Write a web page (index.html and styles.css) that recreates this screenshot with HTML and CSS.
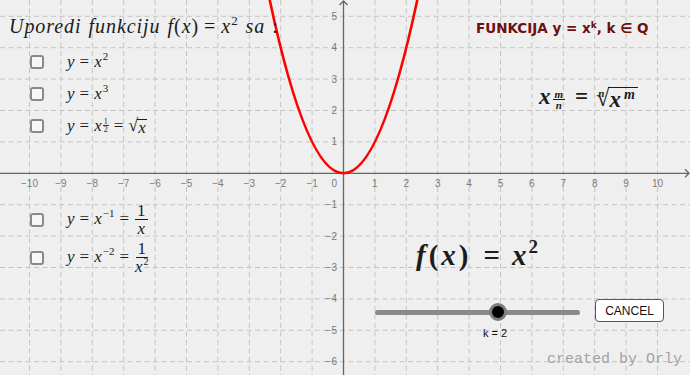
FILE: index.html
```html
<!DOCTYPE html>
<html lang="sr">
<head>
<meta charset="utf-8">
<title>Funkcija y = x^k</title>
<link rel="stylesheet" href="styles.css">
</head>
<body>
<main class="board">
  <svg class="plane" width="690" height="375" viewBox="0 0 690 375" xmlns="http://www.w3.org/2000/svg">
    <g class="grid" stroke="#c4c4c4" stroke-width="1" stroke-dasharray="5 3.5" fill="none">
      <line x1="29.5" y1="0" x2="29.5" y2="375"/>
      <line x1="60.9" y1="0" x2="60.9" y2="375"/>
      <line x1="92.3" y1="0" x2="92.3" y2="375"/>
      <line x1="123.7" y1="0" x2="123.7" y2="375"/>
      <line x1="155.1" y1="0" x2="155.1" y2="375"/>
      <line x1="186.5" y1="0" x2="186.5" y2="375"/>
      <line x1="217.9" y1="0" x2="217.9" y2="375"/>
      <line x1="249.3" y1="0" x2="249.3" y2="375"/>
      <line x1="280.7" y1="0" x2="280.7" y2="375"/>
      <line x1="312.1" y1="0" x2="312.1" y2="375"/>
      <line x1="374.9" y1="0" x2="374.9" y2="375"/>
      <line x1="406.3" y1="0" x2="406.3" y2="375"/>
      <line x1="437.7" y1="0" x2="437.7" y2="375"/>
      <line x1="469.1" y1="0" x2="469.1" y2="375"/>
      <line x1="500.5" y1="0" x2="500.5" y2="375"/>
      <line x1="531.9" y1="0" x2="531.9" y2="375"/>
      <line x1="563.3" y1="0" x2="563.3" y2="375"/>
      <line x1="594.7" y1="0" x2="594.7" y2="375"/>
      <line x1="626.1" y1="0" x2="626.1" y2="375"/>
      <line x1="657.5" y1="0" x2="657.5" y2="375"/>
      <line x1="0" y1="16.3" x2="690" y2="16.3"/>
      <line x1="0" y1="47.7" x2="690" y2="47.7"/>
      <line x1="0" y1="79.1" x2="690" y2="79.1"/>
      <line x1="0" y1="110.5" x2="690" y2="110.5"/>
      <line x1="0" y1="141.9" x2="690" y2="141.9"/>
      <line x1="0" y1="204.7" x2="690" y2="204.7"/>
      <line x1="0" y1="236.1" x2="690" y2="236.1"/>
      <line x1="0" y1="267.5" x2="690" y2="267.5"/>
      <line x1="0" y1="298.9" x2="690" y2="298.9"/>
      <line x1="0" y1="330.3" x2="690" y2="330.3"/>
      <line x1="0" y1="361.7" x2="690" y2="361.7"/>
    </g>
    <g class="axes" stroke="#666" stroke-width="1.3" fill="none">
      <line x1="0" y1="173.3" x2="689" y2="173.3"/>
      <line x1="343.5" y1="1" x2="343.5" y2="375"/>
      <polyline points="339.5,5 343.5,1 347.5,5"/>
      <polyline points="685,169.3 689,173.3 685,177.3"/>
    </g>
    <g class="ticks" font-family="Liberation Sans, Arial, sans-serif" font-size="10" fill="#7a7a7a" text-anchor="middle">
      <text x="29.5" y="187">−10</text>
      <text x="60.9" y="187">−9</text>
      <text x="92.3" y="187">−8</text>
      <text x="123.7" y="187">−7</text>
      <text x="155.1" y="187">−6</text>
      <text x="186.5" y="187">−5</text>
      <text x="217.9" y="187">−4</text>
      <text x="249.3" y="187">−3</text>
      <text x="280.7" y="187">−2</text>
      <text x="312.1" y="187">−1</text>
      <text x="374.9" y="187">1</text>
      <text x="406.3" y="187">2</text>
      <text x="437.7" y="187">3</text>
      <text x="469.1" y="187">4</text>
      <text x="500.5" y="187">5</text>
      <text x="531.9" y="187">6</text>
      <text x="563.3" y="187">7</text>
      <text x="594.7" y="187">8</text>
      <text x="626.1" y="187">9</text>
      <text x="657.5" y="187">10</text>
    </g>
    <g class="ticks" font-family="Liberation Sans, Arial, sans-serif" font-size="10" fill="#7a7a7a" text-anchor="end">
      <text x="337" y="187">0</text>
      <text x="337" y="19.8">5</text>
      <text x="337" y="51.2">4</text>
      <text x="337" y="82.6">3</text>
      <text x="337" y="114">2</text>
      <text x="337" y="145.4">1</text>
      <text x="337" y="208.2">−1</text>
      <text x="337" y="239.6">−2</text>
      <text x="337" y="271">−3</text>
      <text x="337" y="302.4">−4</text>
      <text x="337" y="333.8">−5</text>
      <text x="337" y="365.2">−6</text>
    </g>
    <path d="M268.14,-7.56 Q343.5,354.16 418.86,-7.56" stroke="#ff0000" stroke-width="2.6" fill="none"/>
  </svg>

  <section class="compare">
    <h1 class="title"><i>Uporedi funkciju f</i><span class="up">(</span><i>x</i><span class="up">)</span><span class="rel">=</span><i>x</i><sup class="up">2</sup> <i>sa</i> <span class="up">:</span></h1>
    <ul class="opts opts-top">
      <li class="opt"><span class="cb"></span><span class="eq"><i>y</i><span class="rel">=</span><i>x</i><sup>2</sup></span></li>
      <li class="opt"><span class="cb"></span><span class="eq"><i>y</i><span class="rel">=</span><i>x</i><sup>3</sup></span></li>
      <li class="opt"><span class="cb"></span><span class="eq"><i>y</i><span class="rel">=</span><i>x</i><sup class="sfrac"><span class="fr"><span class="n">1</span><span class="d">2</span></span></sup><span class="rel">=</span><span class="sqrt"><span class="rad">√</span><i class="under">x</i></span></span></li>
    </ul>
  </section>

  <ul class="opts opts-bottom">
    <li class="opt"><span class="cb"></span><span class="eq"><i>y</i><span class="rel">=</span><i>x</i><sup>−1</sup><span class="rel">=</span><span class="frac"><span class="num">1</span><i class="den">x</i></span></span></li>
    <li class="opt"><span class="cb"></span><span class="eq"><i>y</i><span class="rel">=</span><i>x</i><sup>−2</sup><span class="rel">=</span><span class="frac"><span class="num">1</span><span class="den"><i>x</i><sup>2</sup></span></span></span></li>
  </ul>

  <h2 class="heading">FUNKCIJA y = x<sup>k</sup>, k ∈ Q</h2>

  <p class="rule"><i>x</i><sup class="sfrac"><span class="fr"><i class="n">m</i><i class="d">n</i></span></sup><span class="rel">=</span><span class="nroot"><sup class="idx">n</sup><span class="rad">√</span><span class="under"><i>x</i><sup><i>m</i></sup></span></span></p>

  <p class="fx"><i>f</i><span class="par">(</span><i>x</i><span class="par">)</span><span class="rel">=</span><i>x</i><sup>2</sup></p>

  <div class="slider">
    <div class="track"></div>
    <div class="knob"></div>
    <span class="val">k = 2</span>
  </div>

  <button class="cancel" type="button">CANCEL</button>

  <p class="credit">created by Orly</p>
</main>
</body>
</html>
```

FILE: styles.css
```css
* { box-sizing: border-box; }
html, body { margin: 0; padding: 0; }
body { background: #efefef; }

.board {
  position: relative;
  width: 690px;
  height: 375px;
  overflow: hidden;
  background: #efefef;
  font-family: "Liberation Serif", "Times New Roman", serif;
  color: #1c1c1c;
}

.plane { position: absolute; left: 0; top: 0; }

i { font-style: italic; }
.up { font-style: normal; }
.rel { font-style: normal; margin: 0 5px; }

.compare {
  position: absolute;
  left: 9px;
  top: 13px;
}

.title {
  margin: 0;
  font-size: 20px;
  font-weight: normal;
  line-height: 26px;
  letter-spacing: 0.95px;
  word-spacing: 1px;
  white-space: nowrap;
}
.title .rel { margin: 0 5px; }
.title sup { font-size: 13px; vertical-align: 8px; line-height: 0; }

.opts {
  list-style: none;
  margin: 0;
  padding: 0;
  display: flex;
  flex-direction: column;
}
.opts-top { margin-top: 11px; margin-left: 21px; gap: 8px; }
.opts-bottom {
  position: absolute;
  left: 30px;
  top: 204px;
  gap: 6px;
}

.opt {
  display: flex;
  align-items: center;
  gap: 23px;
  height: 24px;
  font-size: 17px;
  white-space: nowrap;
}
.opts-bottom .opt { height: 32px; }

.cb {
  flex: none;
  width: 14px;
  height: 14px;
  border: 2px solid #8a8a8a;
  border-radius: 3px;
  background: #f7f7f7;
}

.eq sup { font-size: 11px; vertical-align: 7px; line-height: 0; margin-left: 1px; }

.sfrac { display: inline-block; }
.fr {
  display: inline-flex;
  flex-direction: column;
  align-items: center;
  font-size: 8px;
  line-height: 7px;
}
.fr .n { border-bottom: 0.6px solid #333; padding: 0 1px; }

.sqrt { display: inline-flex; align-items: flex-end; }
.sqrt .rad { font-size: 18px; line-height: 19px; }
.sqrt .under { border-top: 1px solid #1c1c1c; line-height: 15px; padding: 0 1px; margin-left: -1px; }

.frac {
  display: inline-flex;
  flex-direction: column;
  align-items: center;
  vertical-align: middle;
  margin-left: 1px;
  line-height: 14px;
}
.frac .num { border-bottom: 1px solid #1c1c1c; padding: 0 2px 1px; }
.frac .den { padding-top: 2px; }
.frac .den sup { font-size: 10px; vertical-align: 7px; }

.heading {
  position: absolute;
  left: 476px;
  top: 20px;
  margin: 0;
  font-family: "DejaVu Sans", sans-serif;
  font-size: 13.5px;
  font-weight: bold;
  color: #6e1010;
  white-space: nowrap;
}
.heading sup { font-size: 9px; vertical-align: 5px; line-height: 0; }

.rule {
  position: absolute;
  left: 539px;
  top: 76px;
  margin: 0;
  font-size: 23px;
  font-weight: bold;
  line-height: 30px;
  white-space: nowrap;
  display: flex;
  align-items: flex-end;
}
.rule .rel { margin: 0 10px; align-self: center; padding-top: 6px; }
.rule .sfrac { margin: 0 0 0 2px; align-self: flex-start; padding-top: 1px; }
.rule .fr { font-size: 11px; line-height: 10px; }
.rule .fr .n { border-bottom: 1px solid #1c1c1c; padding: 0 2px; }
.nroot { display: inline-flex; align-items: flex-end; }
.nroot .idx { font-size: 11px; font-style: italic; line-height: 10px; align-self: flex-start; margin-top: 4px; margin-right: -8px; }
.nroot .rad { font-size: 24px; line-height: 28px; }
.nroot .under { border-top: 1px solid #1c1c1c; line-height: 24px; margin-left: -1px; padding: 0 2px 0 1px; letter-spacing: 1px; }
.nroot .under sup { font-size: 14px; vertical-align: 8px; line-height: 0; margin-left: 2px; }

.fx {
  position: absolute;
  left: 416px;
  top: 238px;
  margin: 0;
  font-size: 29px;
  font-weight: bold;
  line-height: 34px;
  white-space: nowrap;
}
.fx .par { margin: 0 3px; }
.fx .rel { margin: 0 12px; }
.fx sup { font-size: 19px; vertical-align: 12px; line-height: 0; margin-left: 2px; }

.slider {
  position: absolute;
  left: 372px;
  top: 302px;
  width: 211px;
  height: 40px;
}
.track {
  margin: 8px 3px 0;
  height: 5px;
  border-radius: 3px;
  background: #8a8a8a;
}
.knob {
  position: absolute;
  left: 117px;
  top: 1px;
  width: 18px;
  height: 18px;
  border-radius: 50%;
  background: #000;
  border: 3px solid #7d7d7d;
}
.val {
  position: absolute;
  left: 111px;
  top: 25px;
  font-family: "Liberation Sans", Arial, sans-serif;
  font-size: 11px;
  color: #111;
  white-space: nowrap;
}

.cancel {
  position: absolute;
  left: 595px;
  top: 299px;
  width: 69px;
  height: 23px;
  padding: 0;
  background: #fff;
  border: 1px solid #555;
  border-radius: 4px;
  font-family: "Liberation Sans", Arial, sans-serif;
  font-size: 12px;
  color: #111;
}

.credit {
  position: absolute;
  left: 547px;
  top: 351px;
  margin: 0;
  font-family: "Liberation Mono", "Courier New", monospace;
  font-size: 15px;
  line-height: 18px;
  color: #a3a3a3;
  white-space: nowrap;
}
```
